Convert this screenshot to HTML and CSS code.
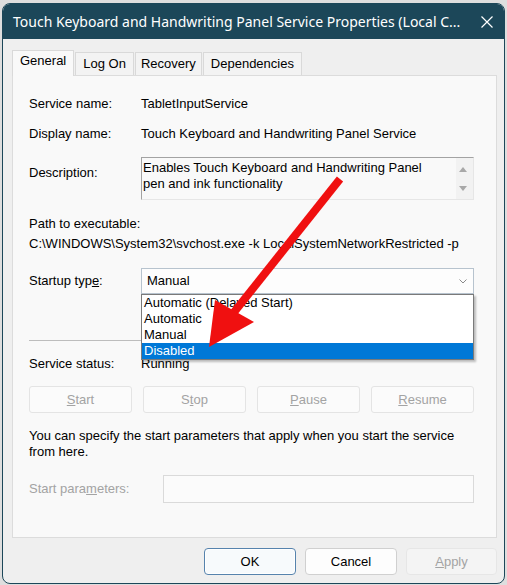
FILE: index.html
```html
<!DOCTYPE html>
<html>
<head>
<meta charset="utf-8">
<link rel="stylesheet" href="styles.css">
</head>
<body>
<div class="window">
  <div class="titlebar">
    <span class="title">Touch Keyboard and Handwriting Panel Service Properties (Local C...</span>
    <svg class="close" width="12" height="12" viewBox="0 0 12 12"><path d="M0.5 0.5 L11.5 11.5 M11.5 0.5 L0.5 11.5" stroke="#ffffff" stroke-width="1.2" fill="none"/></svg>
  </div>
  <div class="dialog">
    <div class="tabs">
      <div class="tab active">General</div>
      <div class="tab">Log On</div>
      <div class="tab tab-narrow">Recovery</div>
      <div class="tab">Dependencies</div>
    </div>
    <div class="panel">
      <div class="row r-name"><span class="label">Service name:</span><span class="value">TabletInputService</span></div>
      <div class="row r-display"><span class="label">Display name:</span><span class="value">Touch Keyboard and Handwriting Panel Service</span></div>
      <div class="row r-desc">
        <span class="label label-desc">Description:</span>
        <div class="desc-box">
          <div class="desc-text">Enables Touch Keyboard and Handwriting Panel<br>pen and ink functionality</div>
          <div class="scroll">
            <svg width="8" height="5" viewBox="0 0 8 5"><path d="M0 5 L4 0 L8 5 Z" fill="#a8a8a8"/></svg>
            <svg width="8" height="5" viewBox="0 0 8 5"><path d="M0 0 L4 5 L8 0 Z" fill="#a8a8a8"/></svg>
          </div>
        </div>
      </div>
      <div class="path-label">Path to executable:</div>
      <div class="path-value">C:\WINDOWS\System32\svchost.exe -k LocalSystemNetworkRestricted -p</div>
      <div class="row r-startup">
        <span class="label">Startup typ<u>e</u>:</span>
        <div class="combo">
          <span>Manual</span>
          <svg class="chevron" width="8" height="5" viewBox="0 0 8 5"><path d="M0.5 0.5 L4 4 L7.5 0.5" stroke="#8a8a8a" stroke-width="1" fill="none"/></svg>
          <ul class="dropdown">
            <li>Automatic (Delayed Start)</li>
            <li>Automatic</li>
            <li>Manual</li>
            <li class="sel">Disabled</li>
          </ul>
        </div>
      </div>
      <div class="separator"></div>
      <div class="row r-status"><span class="label">Service status:</span><span class="value">Running</span></div>
      <div class="svc-buttons">
        <button class="svc-btn"><u>S</u>tart</button>
        <button class="svc-btn">S<u>t</u>op</button>
        <button class="svc-btn"><u>P</u>ause</button>
        <button class="svc-btn"><u>R</u>esume</button>
      </div>
      <p class="hint">You can specify the start parameters that apply when you start the service<br>from here.</p>
      <div class="row r-params">
        <span class="label label-wide label-disabled">Start para<u>m</u>eters:</span>
        <div class="params-input"></div>
      </div>
    </div>
    <div class="footer">
      <button class="btn ok">OK</button>
      <button class="btn">Cancel</button>
      <button class="btn disabled"><u>A</u>pply</button>
    </div>
  </div>
</div>
<svg class="arrow" width="507" height="585" viewBox="0 0 507 585">
  <line x1="340" y1="179" x2="231" y2="316" stroke="#f01010" stroke-width="8"/>
  <polygon points="209,347 215,300 254,322" fill="#f01010"/>
</svg>
</body>
</html>
```

FILE: styles.css
```css
* { box-sizing: border-box; }
html, body { margin: 0; padding: 0; }
body {
  position: relative;
  width: 507px;
  height: 585px;
  overflow: hidden;
  padding: 3px 0 0 2px;
  background: #dedede;
  font-family: "Liberation Sans", Arial, sans-serif;
  font-size: 13px;
  line-height: 16px;
  color: #000;
}
.window {
  width: 503px;
  height: 581px;
  border: 1px solid #1c4759;
  border-radius: 8px;
  overflow: hidden;
  background: #efefef;
  display: flex;
  flex-direction: column;
}
.titlebar {
  height: 35px;
  flex: none;
  background: #1c4759;
  color: #fff;
  display: flex;
  align-items: center;
  padding-left: 10px;
  font-family: "Noto Sans", "Open Sans", sans-serif;
  font-size: 14px;
  white-space: nowrap;
}
.title { flex: none; }
.close { margin-left: auto; margin-right: 11px; flex: none; }
.dialog {
  flex: 1;
  padding: 11px 7px 0 9px;
  display: flex;
  flex-direction: column;
}
.tabs {
  display: flex;
  align-items: flex-end;
  gap: 1px;
  height: 26px;
  margin-bottom: -1px;
  position: relative;
  z-index: 1;
}
.tab {
  height: 23px;
  margin-bottom: 1px;
  padding: 3px 7px 0;
  border: 1px solid #d9d9d9;
  border-bottom: none;
  background: #f3f3f3;
  white-space: nowrap;
}
.tab-narrow { padding: 3px 5px 0; }
.tab.active {
  height: 26px;
  margin-bottom: 0;
  padding-top: 2px;
  background: #f9f9f9;
}
.panel {
  height: 463px;
  flex: none;
  border: 1px solid #dcdcdc;
  background: #f9f9f9;
  padding: 0 22px 0 16px;
  display: flex;
  flex-direction: column;
  position: relative;
}
.row { display: flex; align-items: center; }
.label { width: 112px; flex: none; white-space: nowrap; }
.label-wide { width: 134px; }
.label-disabled { color: #a3a3a3; }
.value { white-space: nowrap; }
.r-name { margin-top: 20px; }
.r-display { margin-top: 14px; }
.r-desc { margin-top: 15px; align-items: flex-start; }
.label-desc { padding-top: 8px; }
.desc-box {
  flex: 1;
  height: 43px;
  display: flex;
  border-top: 1px solid #a3a3a3;
  border-left: 1px solid #a3a3a3;
  border-right: 1px solid #e6e6e6;
  border-bottom: 1px solid #e6e6e6;
}
.desc-text { flex: 1; padding: 2px 0 0 1px; white-space: nowrap; }
.scroll {
  width: 17px;
  flex: none;
  background: #f2f2f2;
  display: flex;
  flex-direction: column;
  align-items: center;
  justify-content: space-between;
  padding: 9px 3px 8px 0;
}
.path-label { margin-top: 16px; }
.path-value { margin-top: 4px; white-space: nowrap; }
.r-startup { margin-top: 16px; }
.combo {
  flex: 1;
  height: 26px;
  border: 1px solid #b7c3ce;
  background: #fdfdfd;
  padding-left: 5px;
  display: flex;
  align-items: center;
  position: relative;
}
.chevron { margin-left: auto; margin-right: 6px; }
.dropdown {
  position: absolute;
  top: calc(100% + 1px);
  left: -1px;
  right: -1px;
  margin: 0;
  padding: 0;
  list-style: none;
  background: #fff;
  border: 1px solid #7a7a7a;
  box-shadow: 2px 2px 2px rgba(0, 0, 0, 0.25);
  z-index: 2;
}
.dropdown li { height: 16px; padding-left: 2px; white-space: nowrap; }
.dropdown li.sel { background: #0078d7; color: #fff; }
.separator { margin-top: 46px; height: 1px; background: #bdbdbd; }
.r-status { margin-top: 15px; }
.svc-buttons {
  margin-top: 14px;
  display: grid;
  grid-template-columns: repeat(4, 1fr);
  gap: 11px;
  height: 27px;
}
button {
  font: inherit;
  margin: 0;
  padding: 0;
}
.svc-btn {
  border: 1px solid #e4e4e4;
  border-radius: 3px;
  background: #fbfbfb;
  color: #a3a3a3;
}
.hint { margin: 15px 0 0; white-space: nowrap; }
.r-params { margin-top: 15px; }
.params-input {
  flex: 1;
  height: 28px;
  border: 1px solid #dadada;
  background: #fbfbfb;
}
.footer {
  display: flex;
  justify-content: flex-end;
  gap: 9px;
  margin-top: 10px;
}
.btn {
  width: 92px;
  height: 27px;
  border: 1px solid #d0d0d0;
  border-radius: 4px;
  background: #fdfdfd;
  color: #000;
}
.btn.ok {
  border-color: #5683ad;
  background: #f7fafc;
  box-shadow: inset 0 0 0 1px #ffffff;
}
.btn.disabled {
  width: 91px;
  border-color: #e6e6e6;
  background: #f4f4f4;
  color: #a3a3a3;
}
.arrow { position: absolute; left: 0; top: 0; pointer-events: none; z-index: 5; }
```
